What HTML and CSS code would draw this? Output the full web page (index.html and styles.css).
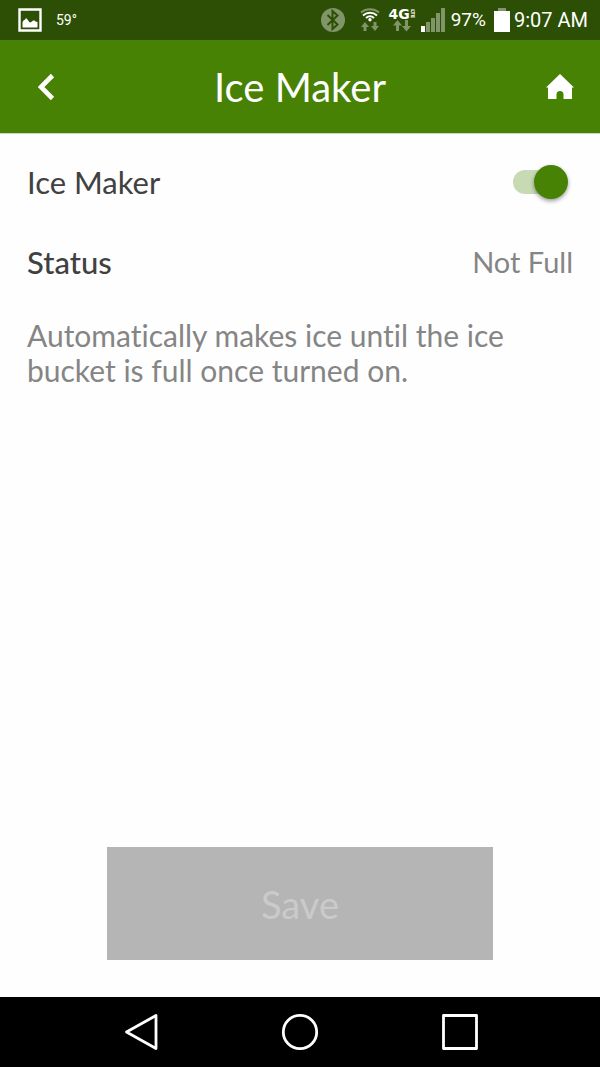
FILE: index.html
```html
<!DOCTYPE html>
<html lang="en">
<head>
<meta charset="utf-8">
<meta name="viewport" content="width=device-width, initial-scale=1">
<title>Ice Maker</title>
<link rel="stylesheet" href="styles.css">
</head>
<body>
<div class="statusbar">
  <svg class="picture" width="24" height="24" viewBox="0 0 24 24" aria-hidden="true"><path d="M1.500 1.500h21v21h-21z" fill="none" stroke="#fff" stroke-width="2.400"/><path d="M4.500 19.500v-5.500l1.500-2 1-.3 1-1.700 1.500 1.500 1.500 2.200 1.500.8 2-1.500 1.500-.8 1.500 1.300 2 .5v5.500z" fill="#fff"/></svg>
  <span class="temperature">59°</span>
  <div class="indicators">
    <svg class="bluetooth" width="24" height="24" viewBox="0 0 24 24" aria-hidden="true"><circle cx="12" cy="12" r="12" fill="#809669"/><path d="M6.500 7l10 9.500-5 4.500V3l5 4.500-10 9.500" fill="none" stroke="#2c4f05" stroke-width="2"/></svg>
    <svg class="wifi" width="20" height="24" viewBox="0 0 20 24" aria-hidden="true"><g fill="none" stroke-width="2"><path d="M1 4.500C6 .3 14 .3 19 4.500" stroke="#809669"/><path d="M3 7.500c4-3.600 10-3.600 14 0M6 10c2.500-2.200 5.500-2.200 8 0" stroke="#fff"/></g><circle cx="10" cy="11.700" r="1.700" fill="#fff"/><path d="M5 14l4 5H6.500v4h-3v-4H1zM15 23l-4-5h2.500v-4h3v4H19z" fill="#809669"/></svg>
    <div class="network">
      <div class="network-label"><span>4G</span><small>LTE</small></div>
      <svg width="18" height="12" viewBox="0 0 18 12" aria-hidden="true"><path d="M4.500 0l4.500 5.500H6V11H3V5.500H0zM13.500 11.500L9 6h3V0h3v6h3z" fill="#809669"/></svg>
    </div>
    <svg class="signal" width="24" height="24" viewBox="0 0 24 24" aria-hidden="true"><path d="M0 18h4v6H0z" fill="#fff"/><path d="M5 14h4v10H5zM10 10h4v14h-4zM15 5h4v19h-4zM20 0h4v24h-4z" fill="#809669"/></svg>
    <span class="reading">97%</span>
    <svg class="battery" width="16" height="24" viewBox="0 0 16 24" aria-hidden="true"><path d="M4 0h8v3H4z" fill="#809669"/><path d="M0 3h16v21H0z" fill="#fff"/></svg>
    <span class="reading clock">9:07 AM</span>
  </div>
</div>
<header class="appbar">
  <button class="icon-button back" type="button" aria-label="Back"><svg width="17" height="28" viewBox="0 0 17 28" aria-hidden="true"><path d="M14.500 2.500L3 14 14.500 25.500" fill="none" stroke="#fff" stroke-width="4.600"/></svg></button>
  <h1>Ice Maker</h1>
  <button class="icon-button home" type="button" aria-label="Home"><svg width="28" height="26" viewBox="0 0 28 26" aria-hidden="true"><path d="M14 0l14 13.500h-2V25h-8.500v-4.500a3.500 3.500 0 0 0-7 0V25H2V13.500H0z" fill="#fff"/></svg></button>
</header>
<main class="content">
  <div class="row">
    <label for="ice">Ice Maker</label>
    <input class="switch" id="ice" type="checkbox" role="switch" checked>
  </div>
  <div class="row">
    <span class="status">Status</span>
    <span class="value">Not Full</span>
  </div>
  <p class="description">Automatically makes ice until the ice bucket is full once turned on.</p>
  <button class="save" type="button" disabled>Save</button>
</main>
<nav class="navbar">
  <button type="button" aria-label="Back"><svg width="38" height="38" viewBox="0 0 38 38" aria-hidden="true"><path d="M35 2.500v33L5.500 19z" fill="none" stroke="#fff" stroke-width="2.800" stroke-linejoin="round"/></svg></button>
  <button type="button" aria-label="Home"><svg width="38" height="38" viewBox="0 0 38 38" aria-hidden="true"><circle cx="19" cy="19" r="16.700" fill="none" stroke="#fff" stroke-width="2.800"/></svg></button>
  <button type="button" aria-label="Recent apps"><svg width="38" height="38" viewBox="0 0 38 38" aria-hidden="true"><path d="M2.500 2.500h33v33h-33z" fill="none" stroke="#fff" stroke-width="2.800" stroke-linejoin="round"/></svg></button>
</nav>
</body>
</html>
```
FILE: styles.css
```css
* { box-sizing: border-box; }
body {
  margin: 0;
  min-height: 100vh;
  display: flex;
  flex-direction: column;
  background: #fefefe;
  color: #414141;
  font: 31px/36px Lato, "Open Sans", sans-serif;
  font-variant-ligatures: none;
}
button { padding: 0; border: 0; background: none; font: inherit; }
svg { display: block; flex: none; }

.statusbar {
  height: 40px;
  padding: 0 12px 0 18px;
  display: flex;
  align-items: center;
  background: #2c4f05;
  color: #fff;
}
.temperature {
  margin-left: 14px;
  font: 14px/20px Roboto, sans-serif;
}
.indicators { margin-left: auto; display: flex; align-items: center; }
.wifi { margin-left: 15px; }
.network {
  margin-left: 8px;
  display: flex;
  flex-direction: column;
  align-items: center;
}
.network-label {
  height: 12px;
  display: flex;
  align-items: center;
  font: bold 14px/12px "DejaVu Sans", sans-serif;
}
.network-label small { font-size: 5px; line-height: 6px; writing-mode: vertical-rl; }
.signal { margin-left: 5px; }
.reading { margin-left: 6px; font: 19px/24px Roboto, sans-serif; }
.battery { margin-left: 8px; }
.clock { margin-left: 4px; font-size: 20px; }

.appbar {
  height: 94px;
  padding: 0 24px;
  display: grid;
  grid-template-columns: 1fr auto 1fr;
  align-items: center;
  background: #478204;
  border-bottom: 1px solid #c8dab4;
  color: #fff;
}
.appbar h1 { margin: 0; font-size: 40px; line-height: 48px; font-weight: 400; }
.icon-button { height: 45px; display: grid; place-items: center; }
.back { width: 45px; }
.home { width: 32px; justify-self: end; }

.content {
  flex: 1;
  padding: 8px 27px 37px;
  display: flex;
  flex-direction: column;
}
.row { height: 80px; display: flex; align-items: center; justify-content: space-between; }
.status { font-weight: 500; }
.value, .description { color: #858585; }
.value { font-size: 29px; }
.description { margin: 16px 0 0; font-size: 30px; line-height: 35px; }
.switch {
  appearance: none;
  position: relative;
  width: 50px;
  height: 24px;
  margin: 0 10px 0 0;
  border-radius: 12px;
  background: #c8dab4;
}
.switch::before {
  content: "";
  position: absolute;
  top: -5px;
  right: -5px;
  width: 34px;
  height: 34px;
  border-radius: 50%;
  background: #478204;
  box-shadow: 0 2px 4px #0006;
}
.save {
  width: 386px;
  max-width: 100%;
  height: 113px;
  margin: auto auto 0;
  background: #b5b5b5;
  color: #cacaca;
  font-size: 38px;
}

.navbar {
  height: 70px;
  padding: 0 60px;
  display: grid;
  grid-template-columns: repeat(3, 1fr);
  background: #000;
}
.navbar button { display: grid; place-items: center; }
```
